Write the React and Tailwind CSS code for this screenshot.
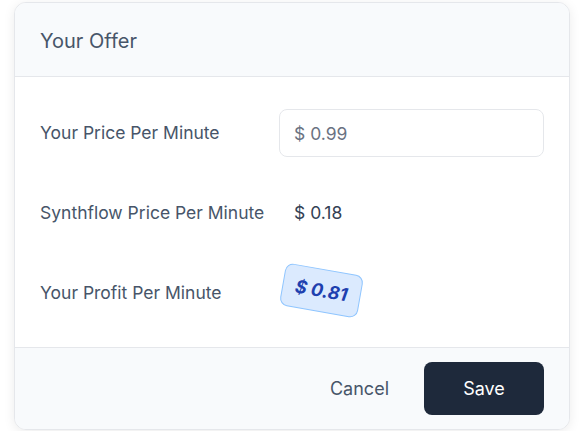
import React from "react";

const rows = [
  { label: "Your Price Per Minute", kind: "input", value: "$ 0.99" },
  { label: "Synthflow Price Per Minute", kind: "text", value: "$ 0.18" },
  { label: "Your Profit Per Minute", kind: "badge", value: "$ 0.81" },
];

export default function App() {
  return (
    <div className="w-[585px] h-[431px] bg-white pl-[14px] pt-[2px] font-['Inter',sans-serif] overflow-hidden">
      <div className="w-[556px] h-[428px] rounded-xl border border-gray-200 bg-white shadow-[0_2px_12px_rgba(0,0,0,0.08)] overflow-hidden flex flex-col">
        {/* header */}
        <div className="h-[74px] shrink-0 bg-[#f8fafc] border-b border-gray-200 flex items-center px-[25px] pt-[2px]">
          <h2 className="text-[20px] font-normal text-[#475569]">Your Offer</h2>
        </div>

        {/* body */}
        <div className="flex flex-col gap-8 px-[25px] pt-8 pb-[30px]">
          {rows.map((row) => (
            <div key={row.label} className="grid grid-cols-[239px_1fr] items-center h-12">
              <span className="text-[17.5px] font-normal text-[#475569]">{row.label}</span>
              {row.kind === "input" && (
                <input
                  className="h-12 w-full rounded-lg border border-gray-200 px-[14px] text-[17.5px] text-gray-700 placeholder:text-gray-500 outline-none"
                  placeholder={row.value}
                />
              )}
              {row.kind === "text" && (
                <span className="pl-[15px] text-[17.5px] font-normal text-[#334155]">{row.value}</span>
              )}
              {row.kind === "badge" && (
                <div className="flex">
                  <span className="ml-[3px] -translate-y-[3px] rotate-[10deg] rounded-lg border border-blue-300 bg-blue-100 px-[12px] py-[7px] text-[18px] font-bold italic text-[#1e40af]">
                    {row.value}
                  </span>
                </div>
              )}
            </div>
          ))}
        </div>

        {/* footer */}
        <div className="flex-1 bg-[#f8fafc] border-t border-gray-200 flex items-center justify-end gap-[31px] px-[25px]">
          <button className="text-[18px] font-normal text-[#475569] px-1">Cancel</button>
          <button className="h-[53px] w-[120px] rounded-lg bg-[#1e293b] text-[18px] font-normal text-white">
            Save
          </button>
        </div>
      </div>
    </div>
  );
}
